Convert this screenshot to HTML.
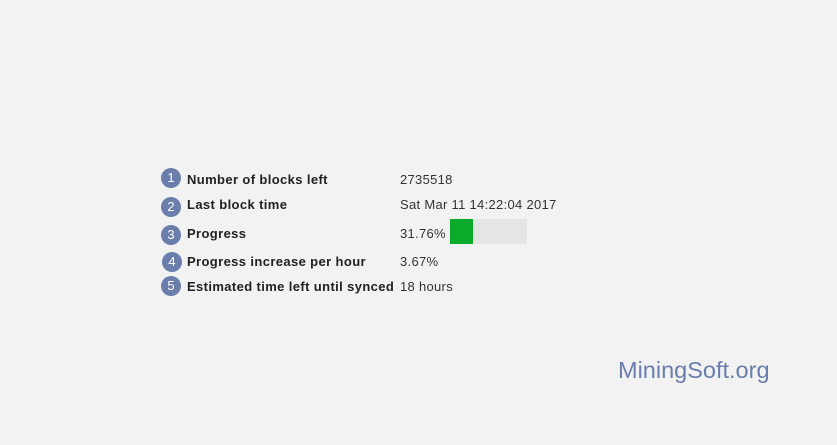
<!DOCTYPE html>
<html><head><style>
body{margin:0;width:837px;height:445px;background:#f2f2f2;position:relative;font-family:"Liberation Sans",sans-serif;overflow:hidden}
.c{position:absolute;width:20px;height:20px;border-radius:50%;background:#6a7dab;color:#fff;font-size:13px;line-height:20px;text-align:center}
.l{position:absolute;left:187px;font-size:13px;font-weight:bold;color:#222;letter-spacing:0.38px}
.v{position:absolute;left:400px;font-size:13px;color:#333;letter-spacing:0.3px}
</style></head><body>
<div class="c" style="left:161px;top:168px">1</div>
<div class="c" style="left:161px;top:197px">2</div>
<div class="c" style="left:161px;top:225px">3</div>
<div class="c" style="left:162px;top:252px">4</div>
<div class="c" style="left:161px;top:276px">5</div>
<div class="l" style="top:172px">Number of blocks left</div>
<div class="l" style="top:197px">Last block time</div>
<div class="l" style="top:226px">Progress</div>
<div class="l" style="top:254px">Progress increase per hour</div>
<div class="l" style="top:279px">Estimated time left until synced</div>
<div class="v" style="top:172px">2735518</div>
<div class="v" style="top:197px">Sat Mar 11 14:22:04 2017</div>
<div class="v" style="top:226px">31.76%</div>
<div style="position:absolute;left:450px;top:219px;width:77px;height:25px;background:#e5e5e5"><div style="width:23px;height:25px;background:#0aab2a"></div></div>
<div class="v" style="top:254px">3.67%</div>
<div class="v" style="top:279px">18 hours</div>
<div style="position:absolute;left:618px;top:357px;font-size:23.5px;color:#6a7dab;font-family:'Liberation Sans',sans-serif">MiningSoft.org</div>
</body></html>
